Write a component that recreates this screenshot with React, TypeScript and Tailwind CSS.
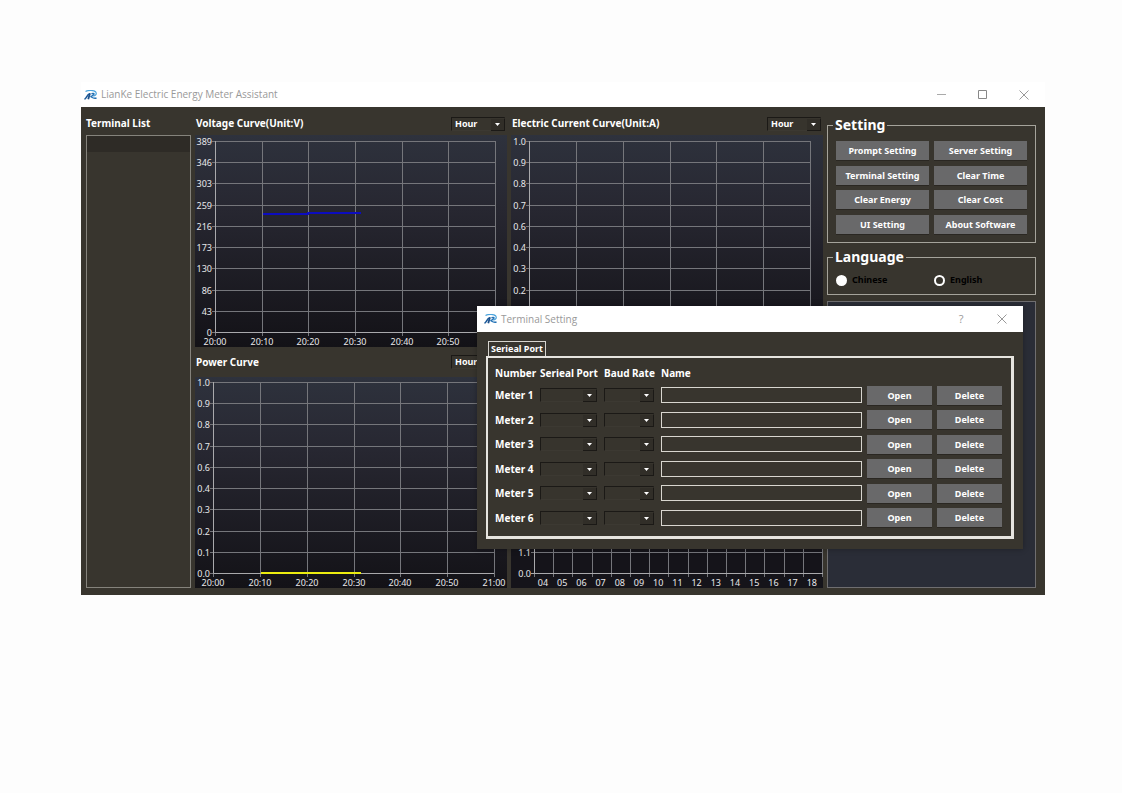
import { ReactNode } from "react";

const times = ["20:00", "20:10", "20:20", "20:30", "20:40", "20:50", "21:00"];
const unitScale = ["1.0", "0.9", "0.8", "0.7", "0.6", "0.4", "0.3", "0.2", "0.1", "0.0"];
const voltScale = ["389", "346", "303", "259", "216", "173", "130", "86", "43", "0"];
const hours = ["04", "05", "06", "07", "08", "09", "10", "11", "12", "13", "14", "15", "16", "17", "18"];

function Logo() {
  return (
    <svg viewBox="0 0 26 20" className="h-[10px] w-[13px] shrink-0" fill="none" aria-hidden="true">
      <path d="M3 3C9 0 20 0 23.500 4c2.500 4 0 7-5 8.500" stroke="#4aa3dc" strokeWidth="2.400" />
      <path d="M1 18.500C5 17 6 9 11.500 7.500" stroke="#1b5a9a" strokeWidth="3.200" />
      <path d="M12 6.500L8.500 18.500" stroke="#1b4f8a" strokeWidth="3.600" />
      <path d="M15 7.500c5-2 6 0 4 2l-5 4c3 2 6 4.500 11 2.500" stroke="#2271b5" strokeWidth="2.800" />
    </svg>
  );
}

function CloseIcon() {
  return (
    <svg viewBox="0 0 10 10" className="size-[10px]" stroke="#999" aria-hidden="true">
      <path d="M.5.5l9 9M9.5.5l-9 9" />
    </svg>
  );
}

function Combo({ label, options, className }: { label: string; options: string[]; className: string }) {
  return (
    <div className={`relative ${className}`}>
      <select
        aria-label={label}
        className="block h-[14px] w-full appearance-none border border-t-[#1b1916] border-l-[#1b1916] border-r-[#2b2823] border-b-[#3c3932] bg-[#37342d] pl-[3px] text-[9px] leading-[12px] font-bold text-white"
      >
        {options.map((o) => (
          <option key={o}>{o}</option>
        ))}
      </select>
      <span className="pointer-events-none absolute right-0 bottom-0 flex h-[12px] w-[14px] items-center justify-center border-r border-b border-[#1b1916] bg-[#312e28]">
        <svg viewBox="0 0 5 3" className="h-[3px] w-[5px]" aria-hidden="true">
          <path d="M0 0h5L2.500 3z" fill="#fff" />
        </svg>
      </span>
    </div>
  );
}

type ChartProps = {
  id: string;
  label: string;
  left: number;
  right: number;
  ticks: string[];
  scale: string[];
  top: number;
  bottom: number;
  height: number;
  labelY: number;
  children?: ReactNode;
};

function LineChart({ id, label, left, right, ticks, scale, top, bottom, height, labelY, children }: ChartProps) {
  const xs = ticks.map((_, i) => Math.round(left + ((right - left) * i) / (ticks.length - 1)));
  const ys = scale.map((_, i) => Math.round(top + ((bottom - top) * i) / (scale.length - 1)));
  return (
    <svg viewBox={`0 0 312 ${height}`} className="block w-full" role="img" aria-label={label}>
      <defs>
        <linearGradient id={id} x1="0" y1="0" x2="0" y2="1">
          <stop offset="0" stopColor="#2e323d" />
          <stop offset="0.350" stopColor="#272731" />
          <stop offset="1" stopColor="#131217" />
        </linearGradient>
      </defs>
      <rect width="312" height={height} fill={`url(#${id})`} />
      <g fill="none" stroke="#75767b">
        {xs.map((x) => (
          <path key={x} d={`M${x + 0.5} ${top}V${bottom + 4}`} />
        ))}
        {ys.map((y) => (
          <path key={y} d={`M${left - 3} ${y + 0.5}H${right}`} />
        ))}
      </g>
      <path d={`M${left + 0.5} ${top}V${bottom + 0.5}H${right}`} fill="none" stroke="#a9a9ac" />
      <g fill="#e8e8ea" className="text-[9px]">
        {scale.map((s, i) => (
          <text key={s} x={left - 3} y={ys[i] + 4} textAnchor="end">{s}</text>
        ))}
        {ticks.map((t, i) => (
          <text key={t} x={xs[i]} y={labelY} textAnchor="middle">{t}</text>
        ))}
      </g>
      {children}
    </svg>
  );
}

function HourChart() {
  const lines = Array.from({ length: 16 }, (_, i) => Math.round(23 + i * 19.2));
  return (
    <svg viewBox="0 0 312 211" className="block w-full" role="img" aria-label="Hourly chart">
      <rect width="312" height="211" fill="#15141a" />
      <g fill="none" stroke="#75767b">
        {lines.map((x) => (
          <path key={x} d={`M${x + 0.5} 5V200`} />
        ))}
        <path d="M20 175.500H312" />
      </g>
      <path d="M20 196.500H312M23.500 5V196" fill="none" stroke="#a9a9ac" />
      <g fill="#e8e8ea" className="text-[9px]">
        <text x="20" y="179" textAnchor="end">1.1</text>
        <text x="20" y="200" textAnchor="end">0.0</text>
        {hours.map((h, i) => (
          <text key={h} x={32 + i * 19.2} y="209" textAnchor="middle">{h}</text>
        ))}
      </g>
    </svg>
  );
}

function ChartHeading({ title, className }: { title: string; className: string }) {
  return (
    <div className={`flex items-center justify-between ${className}`}>
      <h2 className="pl-px text-[10px] font-bold whitespace-nowrap">{title}</h2>
      <Combo label={`${title} interval`} options={["Hour", "Day"]} className="mr-[2px] w-[54px]" />
    </div>
  );
}

const buttonStyle = "block h-[19px] w-full bg-[#69696a] text-[9px] leading-[19px] font-bold whitespace-nowrap text-white shadow-[0_1px_0_#2a2722]";
const radioStyle = "size-[11px] appearance-none rounded-full border-2 border-white bg-white checked:bg-[#37342d]";

function SettingsPanel() {
  const items = ["Prompt Setting", "Server Setting", "Terminal Setting", "Clear Time", "Clear Energy", "Clear Cost", "UI Setting", "About Software"];
  return (
    <fieldset className="h-[127px] border border-[#a5a39b] px-[8px]">
      <legend className="-ml-[3px] px-[2px] text-[14px] leading-[18px]">Setting</legend>
      <div className="mt-[7px] grid h-[93px] grid-cols-2 content-between gap-x-[5px]">
        {items.map((t) => (
          <button key={t} type="button" className={buttonStyle}>{t}</button>
        ))}
      </div>
    </fieldset>
  );
}

function LanguagePanel() {
  return (
    <fieldset className="mt-[5px] h-[47px] border border-[#a5a39b] px-[8px]">
      <legend className="-ml-[3px] px-[2px] text-[14px] leading-[18px]">Language</legend>
      <div className="grid grid-cols-2 gap-x-[5px] pt-[7px] text-[9px] leading-[14px] text-black">
        <label className="flex items-center gap-[5px]">
          <input type="radio" name="language" className={radioStyle} />
          Chinese
        </label>
        <label className="flex items-center gap-[5px]">
          <input type="radio" name="language" defaultChecked className={radioStyle} />
          English
        </label>
      </div>
    </fieldset>
  );
}

function TerminalDialog() {
  return (
    <div role="dialog" aria-label="Terminal Setting" className="absolute top-[224px] left-[396px] w-[546px] bg-[#38352e] pb-[10px] shadow-[0_0_6px_rgba(0,0,0,0.3)]">
      <div className="flex h-[26px] items-center bg-white pl-[7px] font-['Open_Sans',sans-serif] text-[10px] font-normal text-[#999]">
        <Logo />
        <span className="ml-[4px] flex-1">Terminal Setting</span>
        <button type="button" aria-label="Help" className="w-[40px] text-[11px]">?</button>
        <button type="button" aria-label="Close" className="flex w-[42px] justify-center"><CloseIcon /></button>
      </div>
      <div className="px-[9px] pt-[9px]">
        <button type="button" className="ml-[2px] block h-[15px] w-[58px] border border-b-0 border-[#d6d4ce] text-center text-[9px] leading-[14px] font-bold whitespace-nowrap">Serieal Port</button>
        <div className="border-t-2 border-r-[3px] border-b-[3px] border-l-2 border-[#e6e4df] pt-[5px] pr-[9px] pb-[6px] pl-[7px]">
          <table className="h-[167px] w-full table-fixed border-collapse text-left text-[10px] leading-[14px] whitespace-nowrap">
            <colgroup>
              <col className="w-[45px]" />
              <col className="w-[64px]" />
              <col className="w-[57px]" />
              <col />
              <col className="w-[70px]" />
              <col className="w-[65px]" />
            </colgroup>
            <thead>
              <tr className="h-[20px]">
                <th className="p-0">Number</th>
                <th className="p-0">Serieal Port</th>
                <th className="p-0">Baud Rate</th>
                <th className="p-0">Name</th>
                <th className="p-0" />
                <th className="p-0" />
              </tr>
            </thead>
            <tbody>
              {[1, 2, 3, 4, 5, 6].map((n) => (
                <tr key={n}>
                  <th className="p-0">Meter {n}</th>
                  <td className="p-0"><Combo label={`Meter ${n} port`} options={[""]} className="w-[57px]" /></td>
                  <td className="p-0"><Combo label={`Meter ${n} baud rate`} options={[""]} className="w-[50px]" /></td>
                  <td className="p-0 pr-[5px]"><input aria-label={`Meter ${n} name`} className="block h-[16px] w-full border border-[#d8d6cf] bg-transparent px-[2px]" /></td>
                  <td className="p-0 pr-[5px]"><button type="button" className={buttonStyle}>Open</button></td>
                  <td className="p-0"><button type="button" className={buttonStyle}>Delete</button></td>
                </tr>
              ))}
            </tbody>
          </table>
        </div>
      </div>
    </div>
  );
}

export default function App() {
  return (
    <div className="min-h-screen bg-[#fdfdfd] pt-[82px] pr-[77px] pl-[81px] font-['Noto_Sans','DejaVu_Sans',sans-serif] font-bold">
      <div className="relative text-white">
        <header className="flex h-[25px] items-center bg-white pl-[3px] font-['Open_Sans',sans-serif] text-[10px] font-normal text-[#999]">
          <Logo />
          <h1 className="ml-[4px] flex-1">LianKe Electric Energy Meter Assistant</h1>
          <button type="button" aria-label="Minimize" className="flex w-[41px] justify-center">
            <svg viewBox="0 0 9 9" className="size-[9px]" stroke="#aaa" aria-hidden="true"><path d="M0 4.500h9" /></svg>
          </button>
          <button type="button" aria-label="Maximize" className="flex w-[41px] justify-center">
            <svg viewBox="0 0 9 9" className="size-[9px]" fill="none" stroke="#888" aria-hidden="true"><path d="M.5.5h8v8h-8z" /></svg>
          </button>
          <button type="button" aria-label="Close" className="flex w-[42px] justify-center"><CloseIcon /></button>
        </header>

        <main className="grid grid-cols-[105px_minmax(0,1fr)_minmax(0,1fr)_209px] gap-x-[4px] bg-[#38352e] pr-[9px] pb-[7px] pl-[5px]">
          <section className="flex flex-col">
            <h2 className="flex h-[28px] items-center pt-[5px] text-[10px]">Terminal List</h2>
            <div className="flex-1 border border-[#85837c]">
              <div className="h-[16px] bg-[#2e2b26]" />
            </div>
          </section>

          <div className="font-normal">
            <ChartHeading title="Voltage Curve(Unit:V)" className="h-[28px] pt-[5px]" />
            <LineChart id="volt" label="Voltage Curve" left={20} right={300} ticks={times} scale={voltScale} top={6} bottom={197} height={212} labelY={210}>
              <path d="M68 79H113V78H166" fill="none" stroke="#0c0cc0" strokeWidth="2" />
            </LineChart>
            <ChartHeading title="Power Curve" className="h-[30px]" />
            <LineChart id="power" label="Power Curve" left={18} right={299} ticks={times} scale={unitScale} top={5} bottom={196} height={211} labelY={209}>
              <path d="M66 196H166" fill="none" stroke="#ecec10" strokeWidth="2" />
            </LineChart>
          </div>

          <div className="font-normal">
            <ChartHeading title="Electric Current Curve(Unit:A)" className="h-[28px] pt-[5px]" />
            <LineChart id="current" label="Electric Current Curve" left={18} right={299} ticks={times} scale={unitScale} top={6} bottom={197} height={212} labelY={210} />
            <div className="h-[30px]" />
            <HourChart />
          </div>

          <div className="flex flex-col pt-[9px]">
            <SettingsPanel />
            <LanguagePanel />
            <div className="mt-[6px] flex-1 border border-[#6f6e70] bg-[#2a2d37]" />
          </div>
        </main>
        <TerminalDialog />
      </div>
    </div>
  );
}
